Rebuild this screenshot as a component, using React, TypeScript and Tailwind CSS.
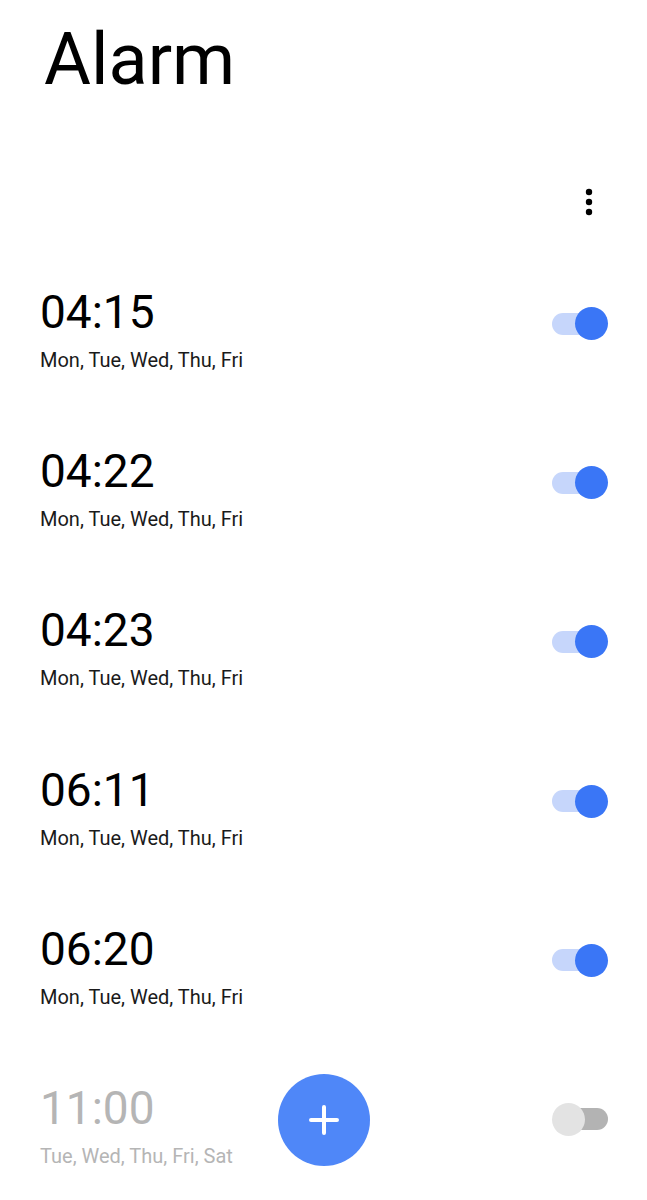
const alarms = [
  { time: "04:15", days: "Mon, Tue, Wed, Thu, Fri", on: true },
  { time: "04:22", days: "Mon, Tue, Wed, Thu, Fri", on: true },
  { time: "04:23", days: "Mon, Tue, Wed, Thu, Fri", on: true },
  { time: "06:11", days: "Mon, Tue, Wed, Thu, Fri", on: true },
  { time: "06:20", days: "Mon, Tue, Wed, Thu, Fri", on: true },
  { time: "11:00", days: "Tue, Wed, Thu, Fri, Sat", on: false },
];

function Toggle({ on }: { on: boolean }) {
  if (on) {
    return (
      <div className="relative h-[33px] w-[56px] shrink-0">
        <div className="absolute left-0 top-[5.5px] h-[22px] w-[46px] rounded-full bg-[#c6d6fb]" />
        <div className="absolute right-0 top-0 h-[33px] w-[33px] rounded-full bg-[#3a76f6]" />
      </div>
    );
  }
  return (
    <div className="relative h-[33px] w-[56px] shrink-0">
      <div className="absolute right-0 top-[5.5px] h-[22px] w-[46px] rounded-full bg-[#b3b3b3]" />
      <div className="absolute left-0 top-0 h-[33px] w-[33px] rounded-full bg-[#e3e3e3]" />
    </div>
  );
}

export default function App() {
  return (
    <div className="relative h-[1200px] w-full overflow-hidden bg-white font-['Roboto',sans-serif]">
      <header className="pl-[44px] pt-[24px]">
        <h1 className="text-[72px] font-normal leading-none text-black">Alarm</h1>
      </header>

      <div className="mt-[92px] flex justify-end pr-[54px]">
        <svg width="8" height="28" viewBox="0 0 8 28" aria-label="More">
          <circle cx="4" cy="4" r="3.2" fill="#000" />
          <circle cx="4" cy="14" r="3.2" fill="#000" />
          <circle cx="4" cy="24" r="3.2" fill="#000" />
        </svg>
      </div>

      <ul className="mt-[34px]">
        {alarms.map((a) => (
          <li
            key={a.time}
            className="flex h-[159.2px] items-start justify-between pl-[40px] pr-[39px] pt-[39px]"
          >
            <div className={a.on ? "text-black" : "text-[#b5b5b5]"}>
              <div className="text-[46px] leading-none">{a.time}</div>
              <div className={`mt-[15px] text-[20px] leading-none ${a.on ? "text-[#1a1a1a]" : "text-[#b5b5b5]"}`}>
                {a.days}
              </div>
            </div>
            <div className="mt-[18px]">
              <Toggle on={a.on} />
            </div>
          </li>
        ))}
      </ul>

      <button
        type="button"
        aria-label="Add alarm"
        className="absolute bottom-[34px] left-1/2 flex h-[92px] w-[92px] -translate-x-1/2 items-center justify-center rounded-full bg-[#4f87f8]"
      >
        <svg width="30" height="30" viewBox="0 0 30 30">
          <path d="M15 2v26M2 15h26" stroke="#fff" strokeWidth="4" strokeLinecap="round" fill="none" />
        </svg>
      </button>
    </div>
  );
}
